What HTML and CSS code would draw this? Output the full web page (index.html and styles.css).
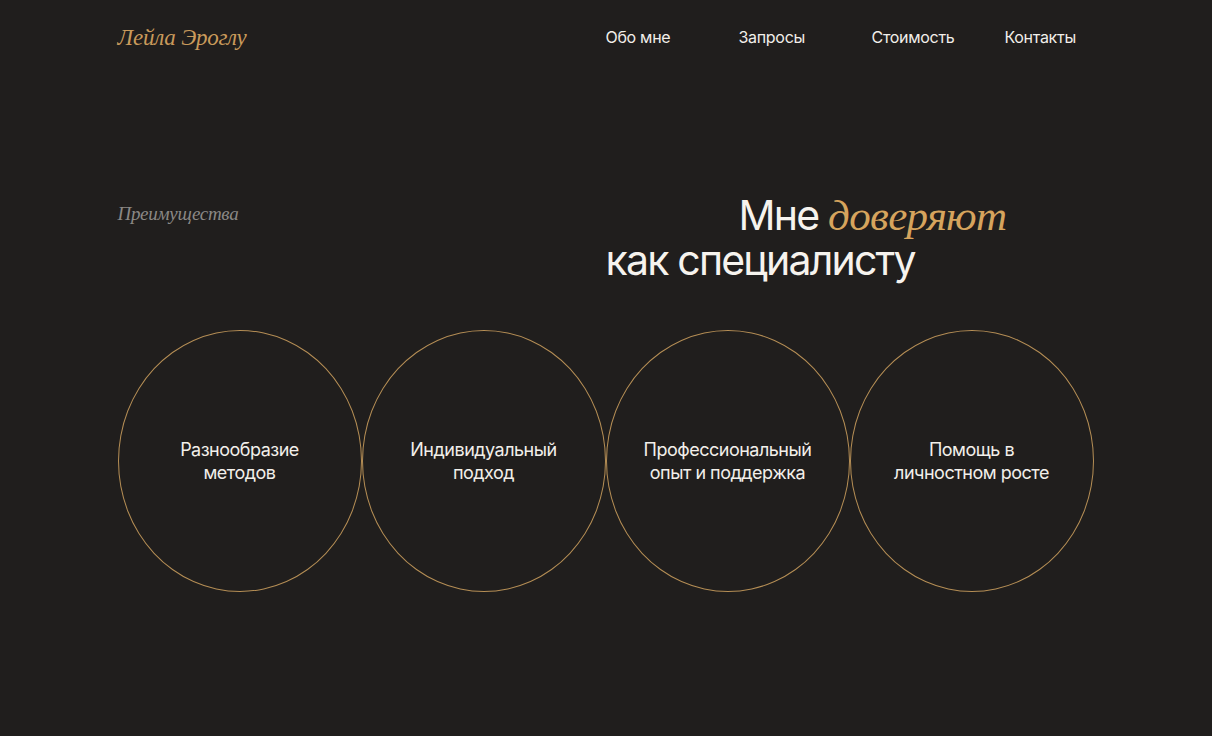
FILE: index.html
```html
<!DOCTYPE html>
<html lang="ru">
<head>
<meta charset="utf-8">
<title>Лейла Эроглу</title>
<link rel="stylesheet" href="styles.css">
</head>
<body>
<div class="page">
  <header class="header">
    <div class="logo">Лейла Эроглу</div>
    <nav class="nav">
      <a class="nav-item">Обо мне</a>
      <a class="nav-item">Запросы</a>
      <a class="nav-item">Стоимость</a>
      <a class="nav-item last">Контакты</a>
    </nav>
  </header>
  <section class="intro">
    <div class="label">Преимущества</div>
    <h1 class="title"><span class="l1">Мне <em>доверяют</em></span><br>как специалисту</h1>
  </section>
  <section class="circles">
    <div class="circle">Разнообразие<br>методов</div>
    <div class="circle">Индивидуальный<br>подход</div>
    <div class="circle">Профессиональный<br>опыт и поддержка</div>
    <div class="circle">Помощь в<br>личностном росте</div>
  </section>
</div>
</body>
</html>
```
FILE: styles.css
```css
html, body {
  margin: 0;
  padding: 0;
  background: #201e1d;
}
body {
  font-family: Inter, "Noto Sans", sans-serif;
  color: #f2efea;
  height: 736px;
  overflow: hidden;
}
.page {
  width: 977px;
  margin: 0 auto;
}
.header {
  display: flex;
  align-items: center;
  justify-content: space-between;
  height: 74px;
}
.logo {
  font-family: "Liberation Serif", serif;
  font-style: italic;
  font-size: 23px;
  color: #c99a5b;
  letter-spacing: -0.2px;
  padding-top: 2px;
}
.nav {
  display: flex;
  width: 489px;
}
.nav-item {
  width: 133px;
  font-size: 16px;
  letter-spacing: -0.3px;
  color: #f2efea;
}
.nav-item.last {
  width: auto;
}
.intro {
  display: flex;
  justify-content: space-between;
  margin-top: 119px;
}
.label {
  font-family: "Liberation Serif", serif;
  font-style: italic;
  font-size: 19px;
  color: #8b8885;
  letter-spacing: -0.3px;
  padding-top: 10px;
}
.title {
  width: 489px;
  margin: 0;
  font-weight: 400;
  font-size: 41px;
  line-height: 45px;
  letter-spacing: -1.8px;
  color: #f6f3ee;
}
.title .l1 {
  padding-left: 133px;
}
.title em {
  font-family: "Liberation Serif", serif;
  font-style: italic;
  color: #d6a45d;
  letter-spacing: -0.6px;
  font-size: 43px;
  line-height: 1;
}
.circles {
  display: flex;
  margin-top: 47px;
}
.circle {
  width: 244px;
  height: 262px;
  box-sizing: border-box;
  border: 1px solid #b58e55;
  border-radius: 50%;
  display: flex;
  align-items: center;
  justify-content: center;
  text-align: center;
  font-size: 18px;
  line-height: 23px;
  letter-spacing: -0.5px;
  color: #f2efea;
}
```
